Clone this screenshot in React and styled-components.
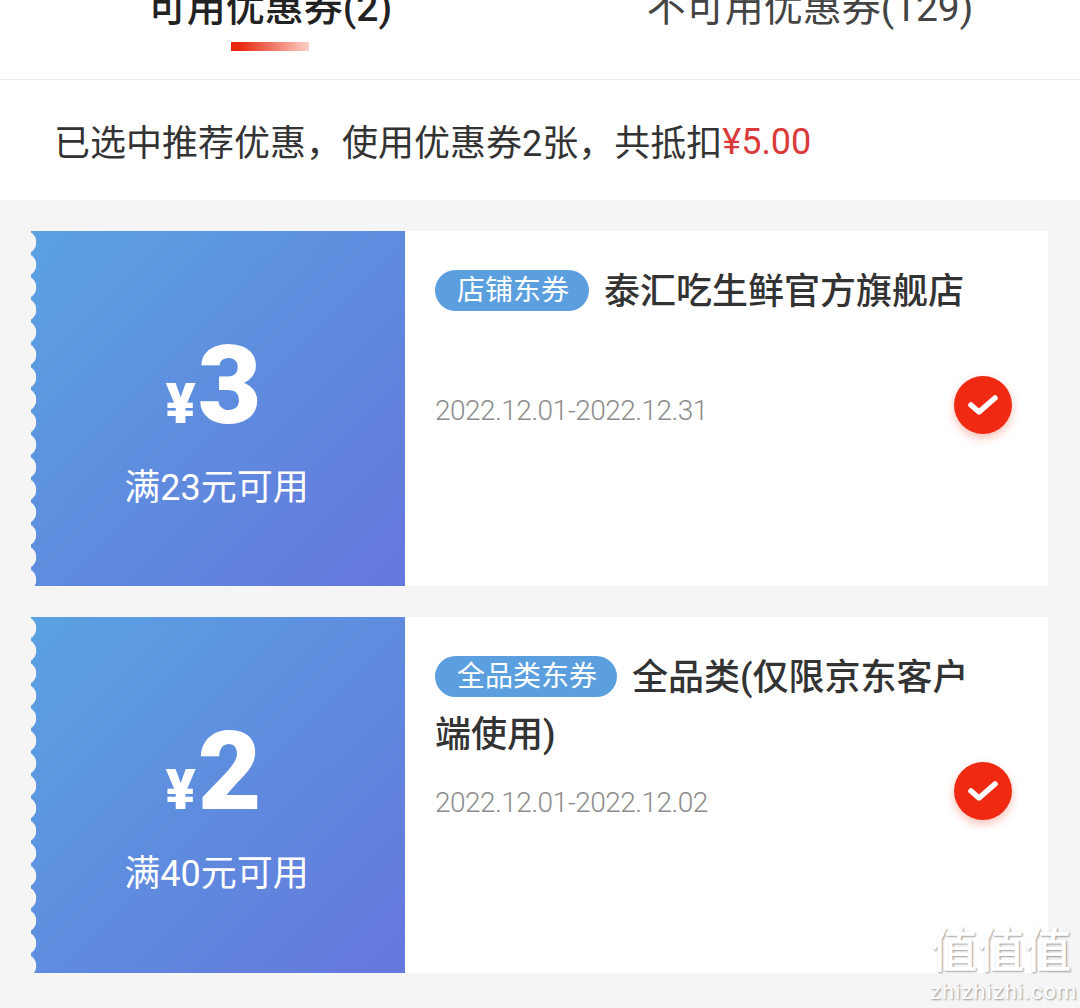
import styled, { createGlobalStyle } from "styled-components";

const Global = createGlobalStyle`
  html, body {
    margin: 0;
    padding: 0;
    background: #f5f5f5;
  }
  body {
    font-family: Roboto, "Noto Sans CJK SC", sans-serif;
  }
`;

const Page = styled.div`
  position: relative;
  width: 1080px;
  height: 1008px;
  overflow: hidden;
  background: #f5f5f5;
`;

const Tabs = styled.div`
  display: flex;
  height: 79px;
  background: #fff;
  border-bottom: 1px solid #ececec;
  overflow: hidden;
`;

const Tab = styled.div`
  width: 540px;
  display: flex;
  flex-direction: column;
  align-items: center;
  margin-top: -19px;
`;

const TabLabel = styled.div`
  font-size: 39px;
  line-height: 54px;
  color: ${(p) => (p.$active ? "#222" : "#444")};
  font-weight: ${(p) => (p.$active ? 500 : 400)};
  white-space: nowrap;
`;

const TabBar = styled.div`
  width: 78px;
  height: 9px;
  margin-top: 7px;
  background: linear-gradient(90deg, #e8260c 0%, #e8260c 10%, #fbd0c8 100%);
`;

const Summary = styled.div`
  height: 120px;
  background: #fff;
  display: flex;
  align-items: center;
  padding-left: 54px;
  font-size: 36px;
  color: #333;
`;

const Money = styled.span`
  color: #d93a3a;
  line-height: 1;
  padding-top: 4px;
`;

const List = styled.div`
  display: flex;
  flex-direction: column;
  gap: 31px;
  padding: 31px 32px 0 31px;
`;

const Card = styled.div`
  position: relative;
  display: flex;
  height: ${(p) => p.$height}px;
  background: #fff;
`;

const Stub = styled.div`
  position: relative;
  width: 374px;
  flex-shrink: 0;
  display: flex;
  flex-direction: column;
  align-items: center;
  color: #fff;
  padding: 97px 3px 0 0;
  box-sizing: border-box;
  background: linear-gradient(135deg, #5aa2e2 0%, #5f8ade 55%, #6577dc 100%);
  &::before {
    content: "";
    position: absolute;
    left: 0;
    top: 0;
    bottom: 0;
    width: 6px;
    background: radial-gradient(circle at -6.5px 11.25px, #f5f5f5 11.5px, transparent 12.1px) 0 0 / 6px 22.5px repeat-y;
  }
`;

const Amount = styled.div`
  display: flex;
  align-items: baseline;
  line-height: 116px;
  font-weight: 900;
  padding-right: 6px;
`;

const Yen = styled.span`
  font-size: 56px;
  margin-right: 2px;
`;

const Value = styled.span`
  font-size: 110px;
`;

const Rule = styled.div`
  font-size: 36px;
  line-height: 46px;
  margin-top: 3px;
`;

const Body = styled.div`
  flex: 1;
  padding: 33px 70px 0 30px;
`;

const Title = styled.div`
  min-height: ${(p) => p.$minHeight}px;
  font-size: 36px;
  font-weight: 500;
  line-height: 57px;
  color: #333;
`;

const Badge = styled.span`
  display: inline-block;
  height: 41px;
  line-height: 41px;
  padding: 0 20px 0 22px;
  margin-right: 15px;
  border-radius: 21px;
  background: #5b9fdf;
  color: #fff;
  font-size: 28px;
  font-weight: 400;
  vertical-align: 4px;
`;

const Dates = styled.div`
  margin-top: 19px;
  font-size: 28px;
  font-weight: 300;
  letter-spacing: -0.5px;
  line-height: 40px;
  color: #8c8c8c;
`;

const Check = styled.div`
  position: absolute;
  right: 36px;
  top: calc(50% - 33px);
  width: 58px;
  height: 58px;
  border-radius: 50%;
  background: #f02a12;
  box-shadow: 0 4px 10px rgba(240, 42, 18, 0.3);
  display: flex;
  align-items: center;
  justify-content: center;
`;

const Watermark = styled.div`
  position: absolute;
  right: 8px;
  top: 922px;
  width: 142px;
  color: #fff;
  text-align: center;
  text-shadow: 1px 1px 2px rgba(0, 0, 0, 0.4);
  pointer-events: none;
`;

const MarkLogo = styled.div`
  font-size: 47px;
  font-weight: 500;
  line-height: 58px;
  white-space: nowrap;
`;

const MarkSite = styled.div`
  font-size: 22px;
  line-height: 24px;
  letter-spacing: 1px;
  white-space: nowrap;
`;

const coupons = [
  {
    height: 355,
    value: "3",
    rule: "满23元可用",
    badge: "店铺东券",
    title: "泰汇吃生鲜官方旗舰店",
    dates: "2022.12.01-2022.12.31",
    minHeight: 108,
  },
  {
    height: 356,
    value: "2",
    rule: "满40元可用",
    badge: "全品类东券",
    title: "全品类(仅限京东客户端使用)",
    dates: "2022.12.01-2022.12.02",
    minHeight: 114,
  },
];

export default function App() {
  return (
    <Page>
      <Global />
      <Tabs>
        <Tab>
          <TabLabel $active>可用优惠券(2)</TabLabel>
          <TabBar />
        </Tab>
        <Tab>
          <TabLabel>不可用优惠券(129)</TabLabel>
        </Tab>
      </Tabs>
      <Summary>
        已选中推荐优惠，使用优惠券2张，共抵扣<Money>¥5.00</Money>
      </Summary>
      <List>
        {coupons.map((c) => (
          <Card key={c.value} $height={c.height}>
            <Stub>
              <Amount>
                <Yen>¥</Yen>
                <Value>{c.value}</Value>
              </Amount>
              <Rule>{c.rule}</Rule>
            </Stub>
            <Body>
              <Title $minHeight={c.minHeight}>
                <Badge>{c.badge}</Badge>
                {c.title}
              </Title>
              <Dates>{c.dates}</Dates>
            </Body>
            <Check>
              <svg width="32" height="24" viewBox="0 0 32 24" fill="none">
                <path d="M4 12l8 7L28 5" stroke="#fff" strokeWidth="5.5" strokeLinecap="round" strokeLinejoin="round" />
              </svg>
            </Check>
          </Card>
        ))}
      </List>
      <Watermark>
        <MarkLogo>值值值</MarkLogo>
        <MarkSite>zhizhizhi.com</MarkSite>
      </Watermark>
    </Page>
  );
}
